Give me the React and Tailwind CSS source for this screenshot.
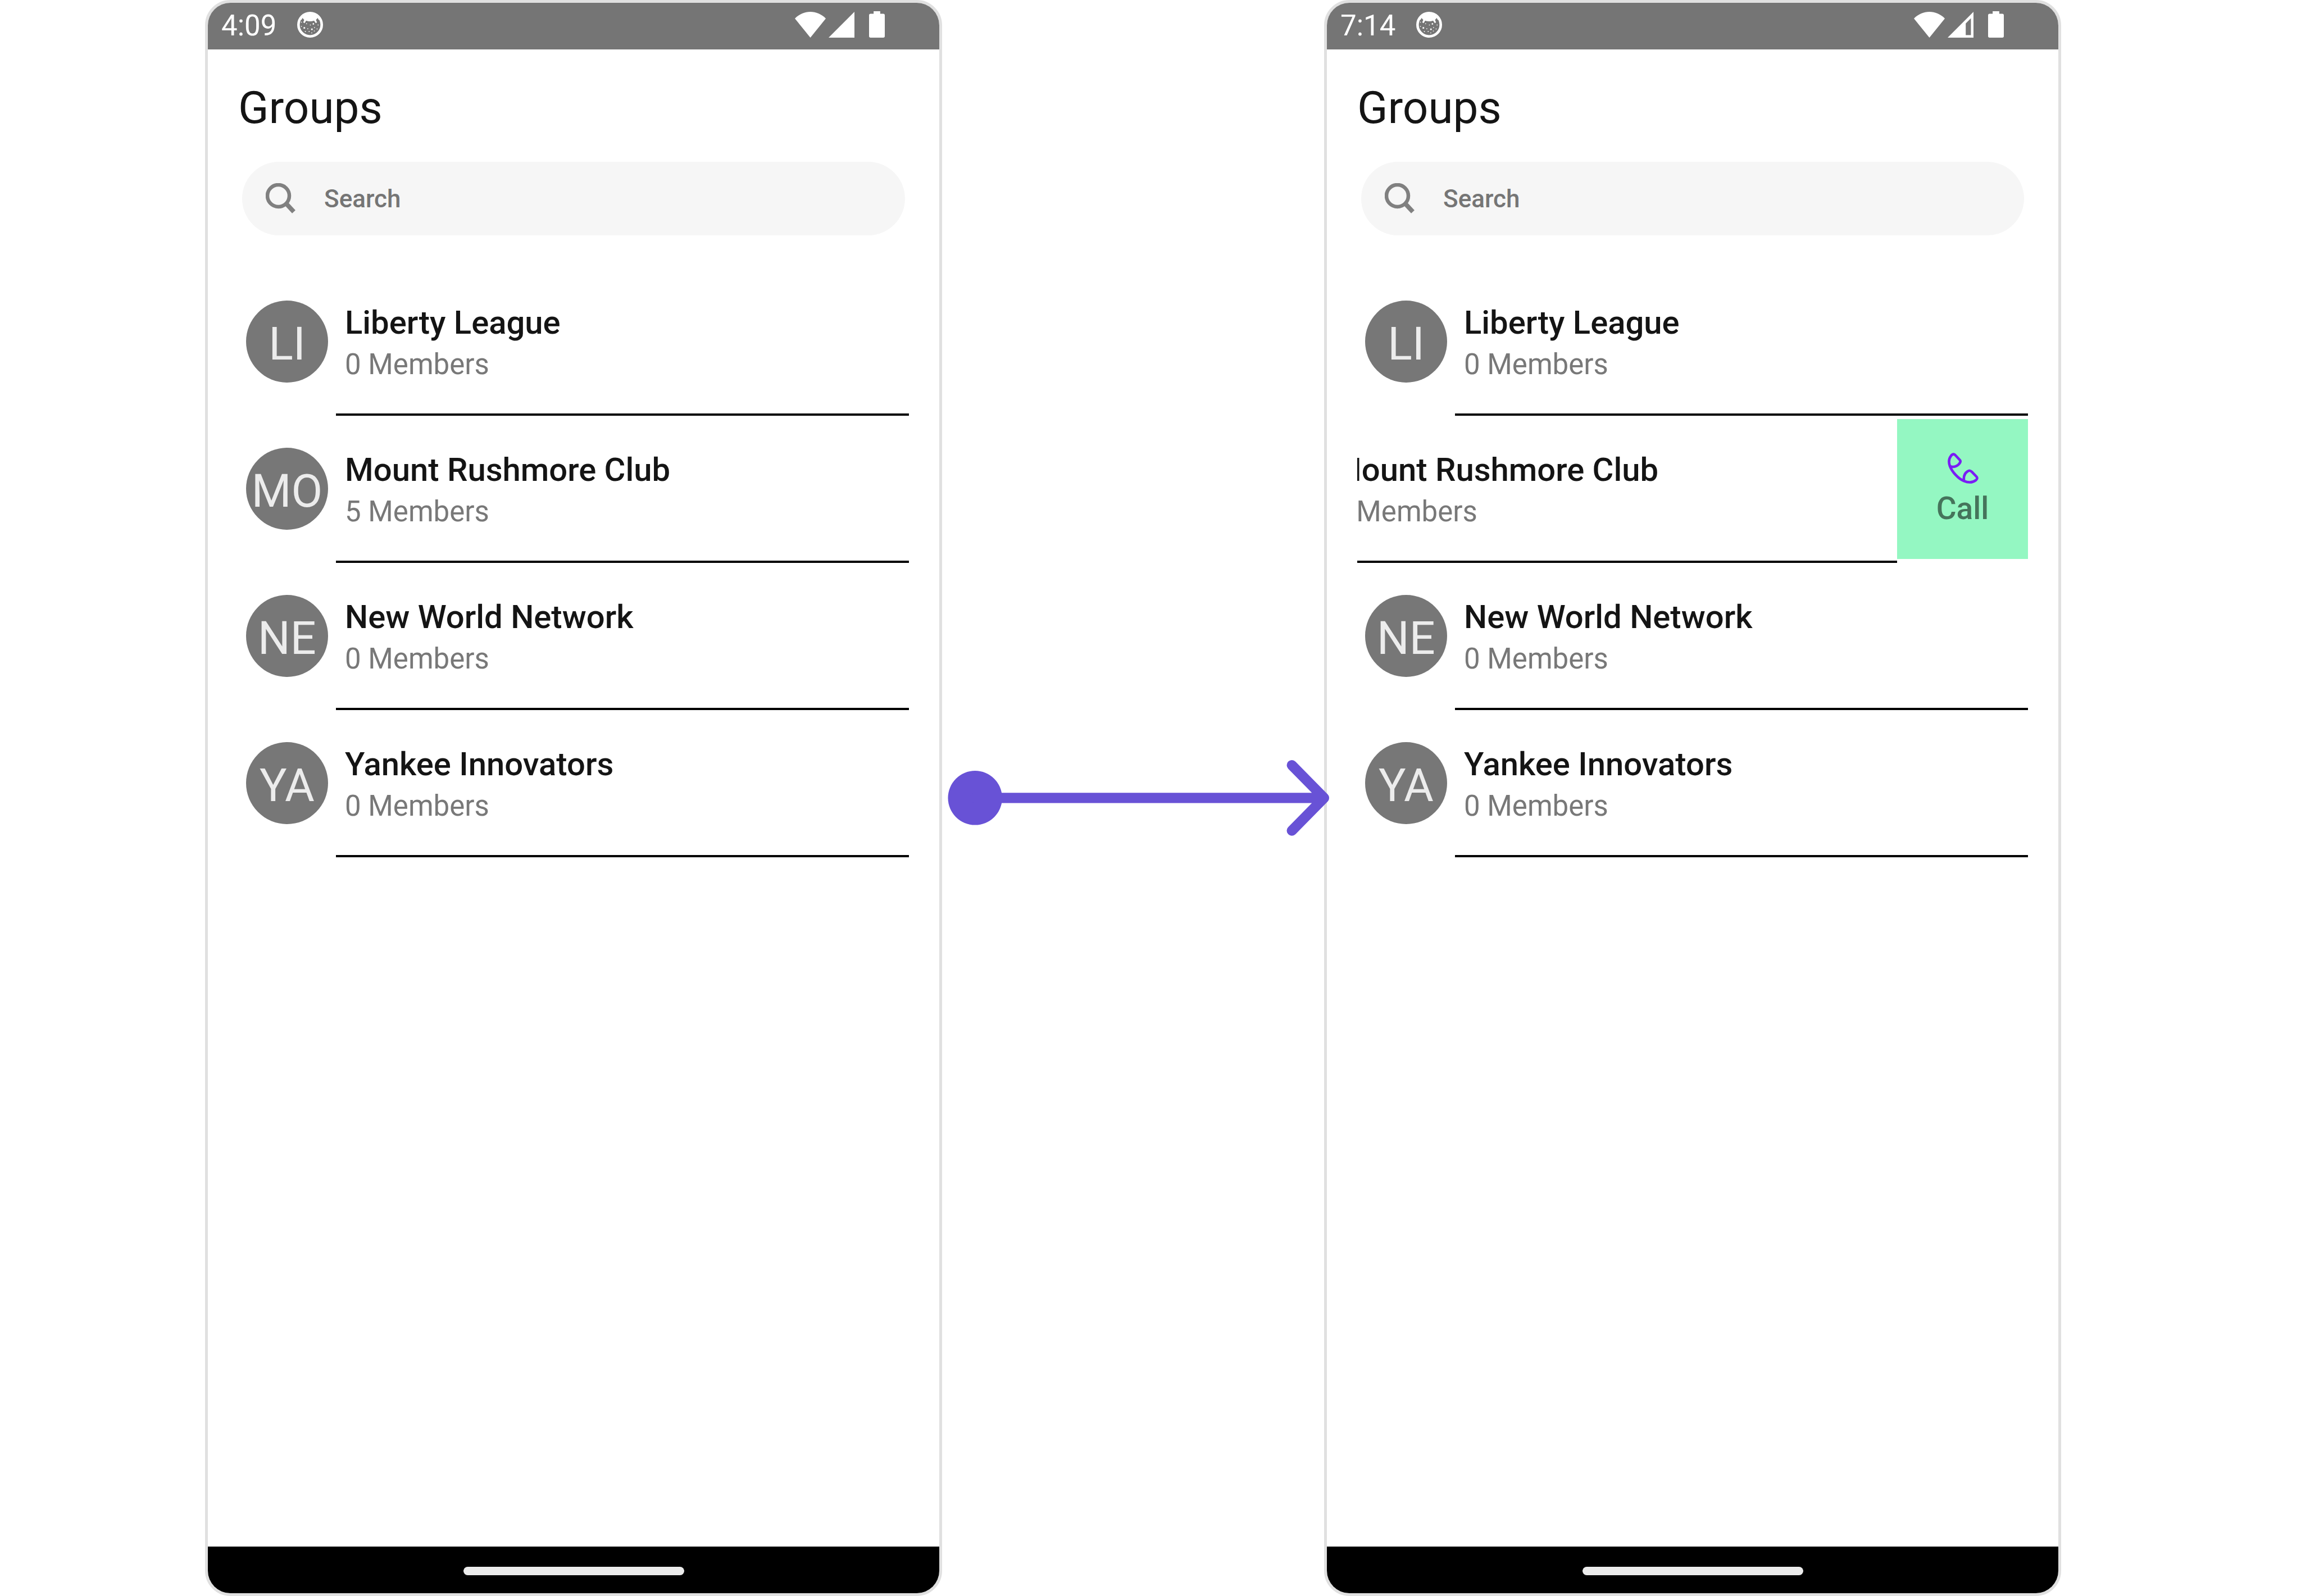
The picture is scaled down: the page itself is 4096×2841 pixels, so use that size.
import React from "react";

const groups = [
  { initials: "LI", name: "Liberty League", members: 0 },
  { initials: "MO", name: "Mount Rushmore Club", members: 5 },
  { initials: "NE", name: "New World Network", members: 0 },
  { initials: "YA", name: "Yankee Innovators", members: 0 },
];

function FaceIcon() {
  return (
    <svg className="size-[46px]" viewBox="30 30 150 150" fill="#fff" aria-hidden="true">
      <circle cx="105" cy="105" r="67.5" fill="none" stroke="#fff" strokeWidth="15" />
      <path d="M48 72 Q70 36 105 36 Q140 36 162 72 L155 77 L149 66 L139 77 L145 91 L138 96 L128 81 Q105 90 82 81 L73 96 L65 91 L71 77 L61 66 L55 77 Z" />
      <path d="M52 88h5v5h-5z M82 97h5v5h-5z M104 104h5v5h-5z M120 96h8v8h-8z M149 104h5v5h-5z M52 112h5v5h-5z M67 119h9v9h-9z M89 126h5v5h-5z M111 127h9v9h-9z M128 119h5v5h-5z M143 127h5v5h-5z M75 142h5v5h-5z M97 142h5v5h-5z M112 150h5v5h-5z M127 139h5v5h-5z" />
    </svg>
  );
}

function WifiIcon() {
  return (
    <svg className="h-[46px] w-[55px]" viewBox="0 0 60 50" fill="#fff" aria-hidden="true">
      <path d="M30 50 L0 13 C17 -4.300 43 -4.300 60 13 Z" />
    </svg>
  );
}

function SignalIcon({ partial }) {
  return (
    <svg className="ml-[5px] size-[46px]" viewBox="0 0 50 50" fill="#fff" fillRule="evenodd" aria-hidden="true">
      <path d={partial ? "M50 0 V50 H0 Z M45 12.500 L35 22.500 V45 H45 Z" : "M50 0 V50 H0 Z"} />
    </svg>
  );
}

function BatteryIcon() {
  return (
    <svg className="ml-[26px] h-[47px] w-[28px]" viewBox="0 0 31 52" fill="#fff" aria-hidden="true">
      <path d="M9 0 H22 V5 H28 Q31 5 31 8 V49 Q31 52 28 52 H3 Q0 52 0 49 V8 Q0 5 3 5 H9 Z" />
    </svg>
  );
}

function SearchIcon() {
  return (
    <svg className="h-[56px] w-[54px] shrink-0" viewBox="0 0 54 56" fill="none" stroke="#808080" strokeWidth="6.5" aria-hidden="true">
      <circle cx="22.500" cy="22.500" r="19.500" />
      <path d="M36 36 L50 51" strokeWidth="8" />
    </svg>
  );
}

function PhoneIcon() {
  return (
    <svg className="size-[56px]" viewBox="28 28 184 184" fill="none" stroke="#7a1cf5" strokeWidth="15" strokeLinecap="round" strokeLinejoin="round" aria-hidden="true">
      <path d="M66 40 Q58 39 51 49 C38 66 36 86 44 108 C56 142 94 183 126 196 C152 207 178 206 196 192 Q209 181 200 171 L172 142 Q160 131 149 139 C132 150 123 168 127 194" />
      <path d="M66 40 Q71 39 77 46 L103 74 Q109 81 103 90 C92 109 66 120 45 109" />
    </svg>
  );
}

function StatusBar({ time, partial }) {
  return (
    <header className="flex h-[83px] items-center bg-[#757575] pr-[97px] pl-6 text-[51px] text-white">
      <span>{time}</span>
      <div className="mb-1.5 ml-[37px]">
        <FaceIcon />
      </div>
      <div className="mb-1.5 ml-auto flex items-center">
        <WifiIcon />
        <SignalIcon partial={partial} />
        <BatteryIcon />
      </div>
    </header>
  );
}

function GroupRow({ group, swiped }) {
  return (
    <li className="flex overflow-hidden">
      <div className={swiped ? "-ml-[233px] flex w-full shrink-0" : "flex w-full shrink-0"}>
        <div className="mt-[57px] mr-3.5 ml-3.5 flex size-[146px] shrink-0 items-center justify-center rounded-full bg-[#777777] pt-2 text-[81px] leading-none text-[#ececec]">
          {group.initials}
        </div>
        <div className="min-w-0 flex-1 border-b-4 border-black pt-[60px] pb-12 pl-4">
          <h2 className="text-[58px] leading-[72px] font-medium whitespace-nowrap text-[#141414]">{group.name}</h2>
          <p className="text-[51px] leading-[78px] whitespace-nowrap text-[#787878]">{group.members} Members</p>
        </div>
      </div>
      {swiped && (
        <button type="button" className="mt-1.5 mb-[7px] flex w-[233px] shrink-0 flex-col items-center bg-[#94f7c2] pt-[59px] text-[55px] leading-[64px] font-medium text-[#45745b]">
          <PhoneIcon />
          <span className="mt-3">Call</span>
        </button>
      )}
    </li>
  );
}

function Phone({ id, time, partial, swipedName }) {
  return (
    <section className="flex min-w-0 flex-col overflow-hidden rounded-[45px] border-[5px] border-[#e0e0e0] bg-white">
      <StatusBar time={time} partial={partial} />
      <main className="flex-1 px-[54px] pt-14">
        <h1 className="text-[80px] leading-[96px] text-[#141414]">Groups</h1>
        <label htmlFor={id} className="mx-[7px] mt-12 flex h-[131px] items-center rounded-full bg-[#f6f6f6] pl-[42px]">
          <SearchIcon />
          <input id={id} type="search" aria-label="Search" placeholder="Search" className="ml-[50px] min-w-0 flex-1 bg-transparent text-[44px] font-medium outline-none placeholder:text-[#757575]" />
        </label>
        <ul className="mt-[59px]">
          {groups.map((group) => (
            <GroupRow key={group.name} group={group} swiped={group.name === swipedName} />
          ))}
        </ul>
      </main>
      <footer className="flex h-[83px] items-center justify-center bg-black pt-1">
        <div className="h-[15px] w-[393px] rounded-full bg-[#ebebeb]" />
      </footer>
    </section>
  );
}

function FlowArrow() {
  return (
    <div className="z-10 flex items-center">
      <svg className="w-full overflow-visible" viewBox="1841 1486 747 148" fill="none" stroke="#6852d6" strokeWidth="20" strokeLinecap="round" strokeLinejoin="round" aria-hidden="true">
        <circle cx="1905.500" cy="1560" r="53" fill="#6852d6" stroke="none" />
        <path d="M1905 1560 H2588 M2525 1496 L2588 1560 L2525 1624" />
      </svg>
    </div>
  );
}

export default function App() {
  return (
    <div className="grid min-h-screen grid-cols-[365fr_1312fr_680fr_1312fr_427fr] bg-white font-['Roboto',sans-serif]">
      <div />
      <Phone id="search-groups" time="4:09" />
      <FlowArrow />
      <Phone id="search-groups-swiped" time="7:14" partial swipedName="Mount Rushmore Club" />
    </div>
  );
}
